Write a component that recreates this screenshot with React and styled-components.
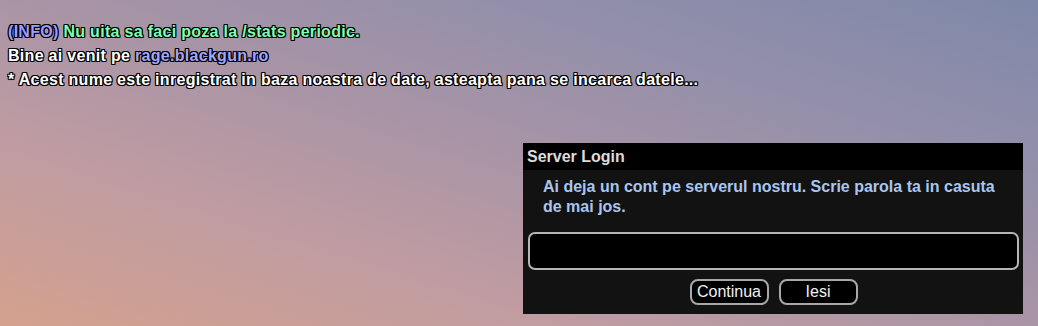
import React from 'react'
import styled, { createGlobalStyle } from 'styled-components'

const GlobalStyle = createGlobalStyle`
  html, body {
    margin: 0;
    padding: 0;
  }
  body {
    font-family: "Liberation Sans", Arial, sans-serif;
  }
`

const Screen = styled.div`
  width: 1038px;
  height: 326px;
  overflow: hidden;
  box-sizing: border-box;
  padding: 20px 0 0 8px;
  display: flex;
  flex-direction: column;
  background: linear-gradient(to top right, #d4a18d 0%, #c09ca2 28%, #a894a6 52%, #928fab 75%, #7f88a8 100%);
`

const Chat = styled.div`
  display: flex;
  flex-direction: column;
`

const ChatLine = styled.div`
  font-family: "Liberation Sans", Arial, sans-serif;
  font-weight: bold;
  font-size: 16px;
  letter-spacing: 0.3px;
  line-height: 24px;
  color: #ffffff;
  white-space: nowrap;
  text-shadow:
    -1px -1px 0 #000, 1px -1px 0 #000, -1px 1px 0 #000, 1px 1px 0 #000,
    0 -1px 0 #000, 0 1px 0 #000, -1px 0 0 #000, 1px 0 0 #000;
`

const Tint = styled.span`
  color: ${p => p.$color};
`

const Window = styled.div`
  width: 500px;
  margin: 51px 0 0 515px;
  background: #121212;
  display: flex;
  flex-direction: column;
`

const TitleBar = styled.div`
  height: 27px;
  background: #000;
  color: #dcdcdc;
  font-size: 16px;
  font-weight: bold;
  line-height: 27px;
  padding-left: 4px;
`

const Body = styled.div`
  display: flex;
  flex-direction: column;
  padding: 7px 4px 9px 5px;
`

const Message = styled.p`
  margin: 0;
  padding: 0 5px 0 15px;
  color: #a9c6ee;
  font-size: 16px;
  font-weight: bold;
  line-height: 20px;
`

const Field = styled.input`
  margin-top: 15px;
  height: 38px;
  box-sizing: border-box;
  background: #000;
  border: 2px solid #b5b5b5;
  border-radius: 7px;
  outline: none;
  color: #fff;
  font-size: 15px;
  padding: 0 8px;
`

const Actions = styled.div`
  margin-top: 9px;
  display: flex;
  justify-content: center;
  gap: 10px;
`

const Button = styled.button`
  width: 79px;
  height: 26px;
  box-sizing: border-box;
  background: #000;
  border: 2px solid #a8a8a8;
  border-radius: 8px;
  color: #f2f2f2;
  font-family: "Liberation Sans", Arial, sans-serif;
  font-size: 16px;
  padding: 0;
  cursor: pointer;
`

export default function App() {
  return (
    <>
      <GlobalStyle />
      <Screen>
        <Chat>
          <ChatLine>
            <Tint $color="#9c9eff">(INFO)</Tint> <Tint $color="#7dffb4">Nu uita sa faci poza la /stats periodic.</Tint>
          </ChatLine>
          <ChatLine>
            Bine ai venit pe <Tint $color="#a2a6ff">rage.blackgun.ro</Tint>
          </ChatLine>
          <ChatLine>
            * Acest nume este inregistrat in baza noastra de date, asteapta pana se incarca datele...
          </ChatLine>
        </Chat>
        <Window>
          <TitleBar>Server Login</TitleBar>
          <Body>
            <Message>Ai deja un cont pe serverul nostru. Scrie parola ta in casuta de mai jos.</Message>
            <Field type="password" />
            <Actions>
              <Button>Continua</Button>
              <Button>Iesi</Button>
            </Actions>
          </Body>
        </Window>
      </Screen>
    </>
  )
}
